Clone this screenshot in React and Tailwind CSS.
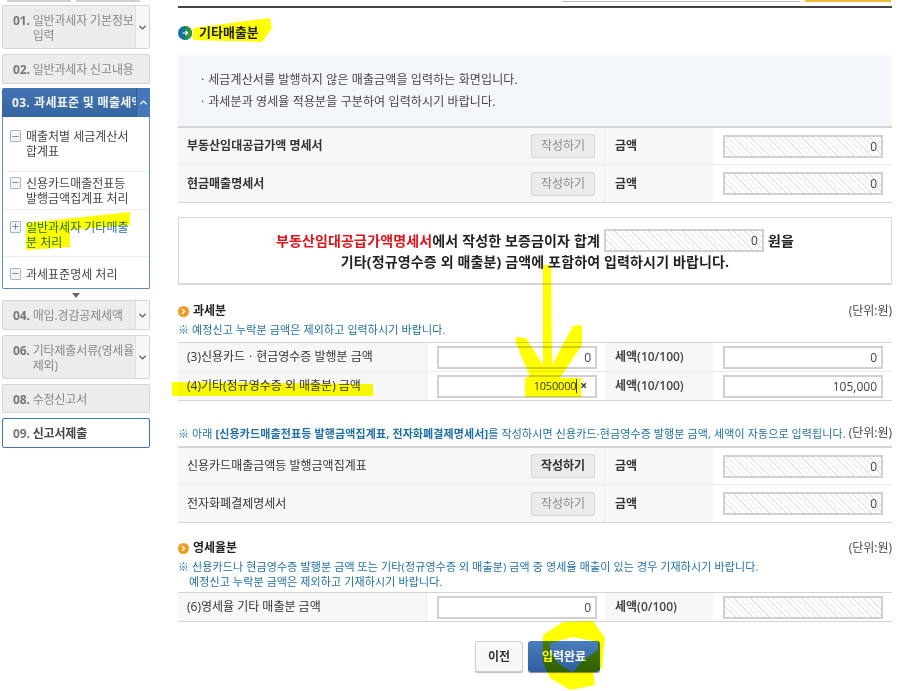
import React from "react";
import { ChevronDown, ChevronUp, Minus, Plus } from "lucide-react";

const hatch =
  "bg-[repeating-linear-gradient(45deg,#fdfdfd,#fdfdfd_3px,#e8e8e8_3px,#e8e8e8_4px)]";

const Field = ({ value, locked, className = "w-[160px]" }) => (
  <input
    readOnly
    value={value}
    className={`h-[23px] ${className} border-2 border-[#d0d0d0] pr-[4px] text-right text-[12px] font-normal text-[#444] outline-none ${locked ? hatch : "bg-white"}`}
  />
);

const WriteBtn = ({ active }) => (
  <button
    className={`h-[24px] w-[64px] rounded-[2px] border border-[#d8d8d8] bg-[#ebebeb] text-[12px] ${active ? "font-bold text-[#333]" : "font-normal text-[#8c8c8c]"}`}
  >
    작성하기
  </button>
);

const Label = ({ children, className = "" }) => (
  <div className={`flex items-center bg-[#f7f7f7] text-[12px] text-[#333] ${className}`}>{children}</div>
);

const Value = ({ children }) => <div className="flex items-center pl-[10px]">{children}</div>;

// row with a write button: 금액 + locked field
const WriteRow = ({ title, active, last }) => (
  <div className={`grid h-[37px] grid-cols-[427px_108px_179px] ${last ? "" : "border-b border-[#ececec]"}`}>
    <Label className={`justify-between border-r border-[#ececec] px-[9px] ${active !== undefined ? "font-normal" : "font-bold"}`}>
      <span>{title}</span>
      <WriteBtn active={active} />
    </Label>
    <Label className="pl-[10px] font-bold">금액</Label>
    <Value>
      <Field value="0" locked />
    </Value>
  </div>
);

const AmountRow = ({ title, input, rate, tax, locked, h, last }) => (
  <div className={`grid ${h} grid-cols-[249px_178px_108px_179px] ${last ? "" : "border-b border-[#ececec]"}`}>
    <Label className="border-r border-[#ececec] pl-[9px]">{title}</Label>
    <Value>{input}</Value>
    <Label className="pl-[10px] font-semibold text-[#444]">{rate}</Label>
    <Value>
      <Field value={tax} locked={locked} />
    </Value>
  </div>
);

const OrangeDot = () => (
  <svg width="11" height="11" viewBox="0 0 11 11" className="shrink-0">
    <circle cx="5.5" cy="5.5" r="5.5" fill="#f29a1f" />
    <path d="M4 3l2.5 2.5L4 8" fill="none" stroke="#fff" strokeWidth="1.4" />
  </svg>
);

const SubHead = ({ title }) => (
  <div className="flex items-center justify-between">
    <div className="flex items-center gap-[4px] text-[12px] font-bold text-[#222]">
      <OrangeDot />
      <span>{title}</span>
    </div>
    <span className="text-[12px] text-[#444]">(단위:원)</span>
  </div>
);

const SideItem = ({ no, title, h, arrow, white }) => (
  <div
    className={`flex ${h} rounded-[2px] border text-[12px] ${white ? "border-[#3f74b5] bg-white text-[#444]" : "border-[#d6d6d6] bg-[#ececec] text-[#888]"}`}
  >
    <div className="flex min-w-0 flex-1 gap-[3px] overflow-hidden whitespace-pre pl-[10px] pt-[7px] leading-[15px] tracking-[-0.15px]">
      <b className="text-[#777]">{no}</b>
      <span className={white ? "font-bold" : ""}>{title}</span>
    </div>
    {arrow && (
      <div className="flex w-[14px] shrink-0 items-center justify-center border-l border-[#e0e0e0] bg-[#f8f8f8]">
        <ChevronDown size={11} strokeWidth={3} className="text-[#555]" />
      </div>
    )}
  </div>
);

const SubItem = ({ title, h, plus, blue, last, className = "" }) => (
  <div className={`flex ${h} items-center pl-[7px] text-[12px] leading-[15px] ${className} ${last ? "" : "border-b border-[#ececec]"} ${blue ? "text-[#1f6fb2]" : "text-[#444]"}`}>
    <div className="flex gap-[5px] whitespace-pre">
      <span className="mt-[1px] flex h-[12px] w-[11px] shrink-0 items-center justify-center rounded-[1px] border border-[#a9b4c2] bg-[#f2f4f7] text-[#4a6d96]">
        {plus ? <Plus size={9} strokeWidth={2} /> : <Minus size={9} strokeWidth={2} />}
      </span>
      <span>{title}</span>
    </div>
  </div>
);

const Sidebar = () => (
  <aside className="ml-[2px] flex w-[148px] shrink-0 flex-col">
    <div className="flex h-[2px] gap-[5px] overflow-hidden">
      <div className="ml-[5px] w-[64px] border border-[#d0d0d0] bg-[#f5f5f5]" />
      <div className="w-[64px] border border-[#d0d0d0] bg-[#f5f5f5]" />
    </div>
    <div className="mt-[3px] flex flex-col gap-[5px]">
      <SideItem no="01." title={"일반과세자 기본정보\n입력"} h="h-[44px]" arrow />
      <SideItem no="02." title="일반과세자 신고내용" h="h-[30px]" />
    </div>
    <div className="mt-[4px] flex h-[29px] rounded-t-[2px] bg-linear-to-b from-[#4474b3] to-[#35659f] text-[12px] font-bold text-[#f2f5fa]">
      <div className="flex min-w-0 flex-1 gap-[4px] overflow-hidden whitespace-nowrap pl-[10px] pt-[7px] leading-[15px] tracking-[0.3px]">
        <span>03.</span>
        <span>과세표준 및 매출세액</span>
      </div>
      <div className="flex w-[14px] shrink-0 items-center justify-center border-l border-[#34608f] bg-[#4477ba]">
        <ChevronUp size={11} strokeWidth={3} className="text-white" />
      </div>
    </div>
    <div className="h-[172px] rounded-b-[2px] border border-t-0 border-[#5f8dc4]">
      <SubItem title={"매출처별 세금계산서\n합계표"} h="h-[55px]" />
      <SubItem title={"신용카드매출전표등\n발행금액집계표 처리"} h="h-[38px]" />
      <SubItem title={"일반과세자 기타매출\n분 처리"} h="h-[47px]" className="pt-[3px]" plus blue />
      <SubItem title="과세표준명세 처리" h="h-[31px]" className="pt-[3px]" last />
    </div>
    <div className="mx-auto mt-[4px] h-0 w-0 border-x-[4px] border-t-[5px] border-x-transparent border-t-[#666]" />
    <div className="mt-[2px] flex flex-col gap-[5px]">
      <SideItem no="04." title="매입.경감공제세액" h="h-[30px]" arrow />
      <SideItem no="06." title={"기타제출서류(영세율\n제외)"} h="h-[44px]" arrow />
      <SideItem no="08." title="수정신고서" h="h-[29px]" />
      <SideItem no="09." title="신고서제출" h="h-[30px]" white />
    </div>
  </aside>
);

const Note = ({ children, className = "" }) => (
  <div className={`pl-[11px] -indent-[11px] text-[11px] leading-[15px] tracking-[0.12px] text-[#1f6fa8] ${className}`}>※ {children}</div>
);

const Main = () => (
  <main className="ml-[28px] w-[714px]">
    {/* cut off search bar at the top */}
    <div className="flex h-[2px] justify-end overflow-hidden pr-[1px]">
      <div className="h-[2px] w-[238px] border-b border-[#bbb]" />
      <div className="ml-[5px] h-[2px] w-[86px] bg-[#f3b93f]" />
    </div>
    <div className="mt-[4px] h-[2px] bg-[#444]" />
    <div className="mt-[17px] flex h-[16px] items-center gap-[7px] text-[13px] font-bold text-[#222]">
      <svg width="14" height="14" viewBox="0 0 14 14" className="shrink-0">
        <circle cx="7" cy="7" r="7" fill="#146fa8" />
        <path d="M7 0a7 7 0 0 1 0 14z" fill="#2f9a3c" />
        <path d="M4.5 7h5M7.5 5l2 2-2 2" fill="none" stroke="#fff" strokeWidth="1.2" />
      </svg>
      <span>기타매출분</span>
    </div>
    <div className="mt-[14px] flex h-[71px] flex-col justify-center gap-[7px] bg-[#f3f6fb] pl-[19px] text-[12px] leading-[15px] tracking-[0.12px] text-[#444]">
      <div>ㆍ세금계산서를 발행하지 않은 매출금액을 입력하는 화면입니다.</div>
      <div>ㆍ과세분과 영세율 적용분을 구분하여 입력하시기 바랍니다.</div>
    </div>
    <div className="border-t-2 border-b border-[#d4d4d4]">
      <WriteRow title="부동산임대공급가액 명세서" />
      <WriteRow title="현금매출명세서" last />
    </div>

    <div className="mt-[14px] flex h-[68px] flex-col items-center justify-center border border-b-2 border-[#d8d8d8] text-[14px] font-bold leading-[20px] tracking-[0.15px] text-[#222]">
      <div className="flex items-center">
        <span className="text-[#e0141a]">부동산임대공급가액명세서</span>
        <span>에서 작성한 보증금이자 합계</span>
        <Field value="0" locked className="mx-[4px] w-[160px]" />
        <span>원을</span>
      </div>
      <div>기타(정규영수증 외 매출분) 금액에 포함하여 입력하시기 바랍니다.</div>
    </div>

    <div className="mt-[17px]">
      <SubHead title="과세분" />
    </div>
    <Note className="mt-[2px]">예정신고 누락분 금액은 제외하고 입력하시기 바랍니다.</Note>
    <div className="mt-[5px] border-y border-[#d4d4d4]">
      <AmountRow
        title="(3)신용카드ㆍ현금영수증 발행분 금액"
        input={<Field value="0" />}
        rate="세액(10/100)"
        tax="0"
        h="h-[29px]"
      />
      <AmountRow
        title="(4)기타(정규영수증 외 매출분) 금액"
        input={
          <div className="flex h-[23px] w-[160px] items-center justify-end border-2 border-[#d0d0d0] bg-white pr-[8px] text-[11px] tracking-[-0.2px] text-[#333]">
            <span>1050000</span>
            <span className="h-[14px] w-px bg-[#333]" />
            <span className="ml-[3px] text-[12px] font-bold leading-none">×</span>
          </div>
        }
        rate="세액(10/100)"
        tax="105,000"
        h="h-[28px]"
        last
      />
    </div>

    <div className="mt-[23px] flex items-center justify-between">
      <Note>
        아래 <b>[신용카드매출전표등 발행금액집계표, 전자화폐결제명세서]</b>를 작성하시면 신용카드·현금영수증 발행분 금액, 세액이 자동으로 입력됩니다.
      </Note>
      <span className="text-[12px] text-[#444]">(단위:원)</span>
    </div>
    <div className="mt-[4px] border-t-2 border-b border-[#d4d4d4]">
      <WriteRow title="신용카드매출금액등 발행금액집계표" active />
      <WriteRow title="전자화폐결제명세서" active={false} last />
    </div>

    <div className="mt-[16px]">
      <SubHead title="영세율분" />
    </div>
    <Note className="mt-[2px]">
      신용카드나 현금영수증 발행분 금액 또는 기타(정규영수증 외 매출분) 금액 중 영세율 매출이 있는 경우 기재하시기 바랍니다.
      <br />
      예정신고 누락분 금액은 제외하고 기재하시기 바랍니다.
    </Note>
    <div className="mt-[3px] border-y border-[#d4d4d4]">
      <AmountRow
        title="(6)영세율 기타 매출분 금액"
        input={<Field value="0" />}
        rate="세액(0/100)"
        tax=""
        locked
        h="h-[28px]"
        last
      />
    </div>

    <div className="mt-[19px] flex justify-center gap-[5px] pl-[5px]">
      <button className="h-[31px] w-[48px] rounded-[3px] border border-[#d0d0d0] bg-[#f8f8f8] text-[12px] font-bold text-[#333] shadow-[0_1px_1px_#bbb]">
        이전
      </button>
      <button className="h-[31px] w-[72px] rounded-[3px] bg-linear-to-b from-[#4a7dbb] to-[#2e5e9e] text-[12px] font-bold text-white shadow-[0_1px_1px_#888]">
        입력완료
      </button>
    </div>
  </main>
);

// marker scribbles someone drew on top of the capture
const Scribbles = () => (
  <svg width="900" height="691" viewBox="0 0 900 691" className="pointer-events-none absolute inset-0 mix-blend-multiply">
    <g fill="#ffff00" fillRule="evenodd">
      <path d="M193 28L270 18L272 28L262 42L193 40Z" />
      <path d="M26 223L130 212L130 225L70 230L70 247L26 250Z" />
      <path d="M172 382L373 384L373 396L172 396Z" />
      <path d="M543 265L551 265L552 365L573 326L582 325L582 345L560 378L581 378L581 397L525 397L525 378L530 376L522 358L515 340L517 337L526 338L543 365Z" />
      <path d="M543 635L563 622L593 621L605 638L602 668L593 673L595 685L570 690L550 678L543 662ZM550 643L573 637L598 642L598 650L580 663L573 673L558 663L550 652Z" />
    </g>
  </svg>
);

export default function App() {
  return (
    <div className="relative h-[691px] w-[900px] overflow-hidden bg-white font-['Open_Sans','Noto_Sans_CJK_KR',sans-serif]">
      <div className="flex items-start">
        <Sidebar />
        <Main />
      </div>
      <Scribbles />
    </div>
  );
}
